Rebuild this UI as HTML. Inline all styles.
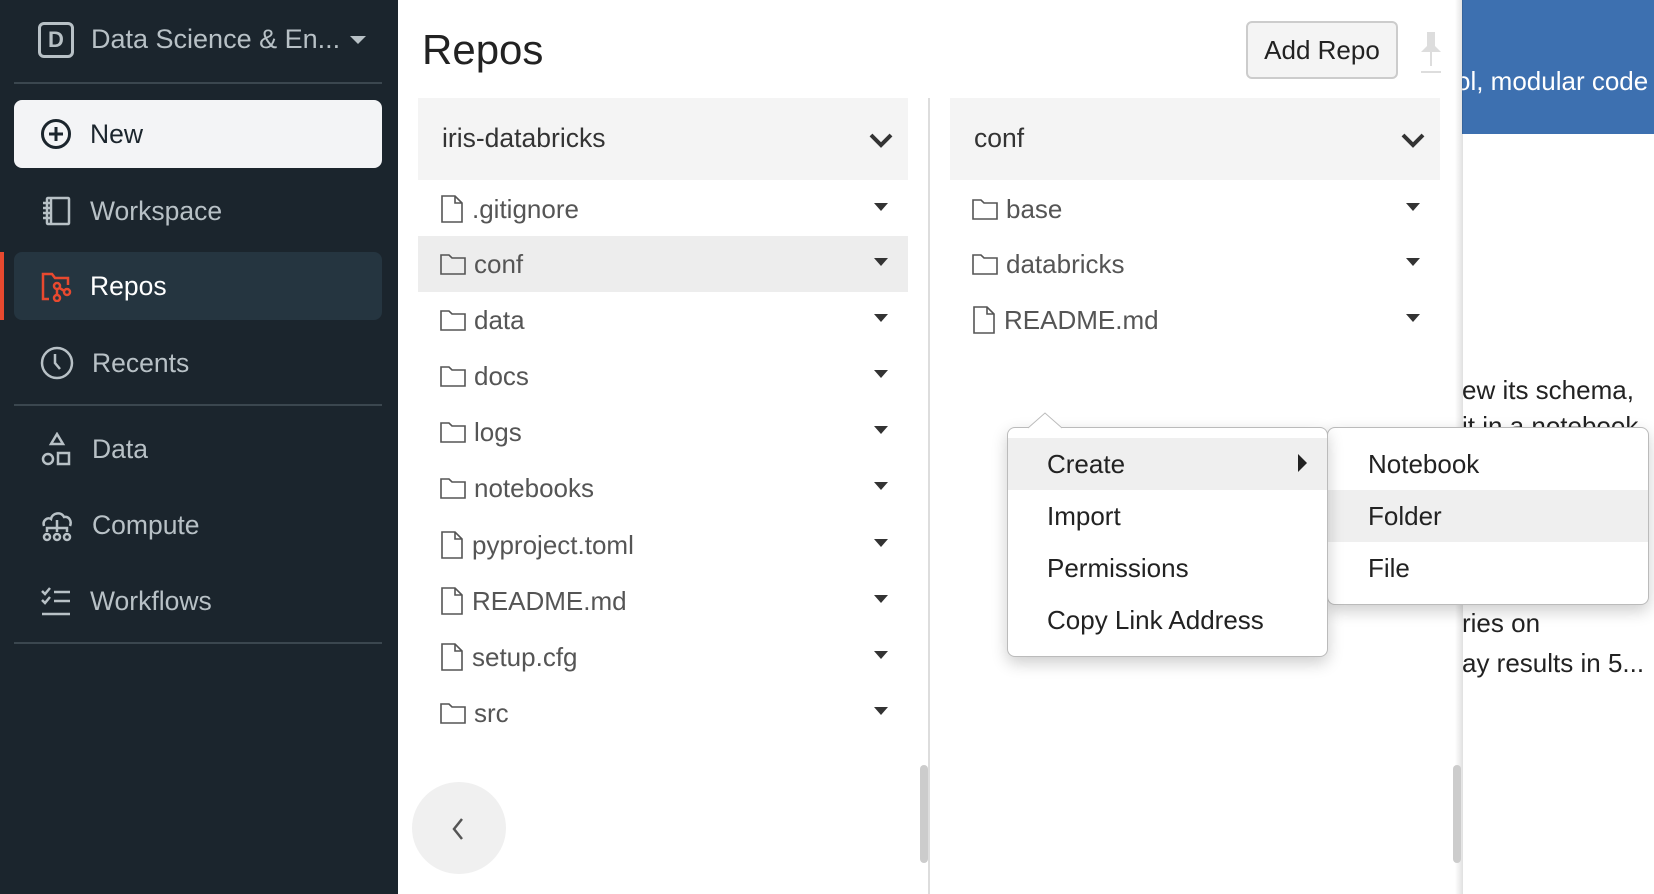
<!DOCTYPE html><html><head><style>
*{margin:0;padding:0;box-sizing:border-box}
body{width:1654px;height:894px;overflow:hidden;position:relative;background:#fff;font-family:"Liberation Sans",sans-serif}
.a{position:absolute}
.sb{left:0;top:0;width:398px;height:894px;background:#1b252d}
.nav{position:absolute;left:14px;width:368px;height:68px;display:flex;align-items:center;padding-left:26px;font-size:26.5px;color:#b8c1c6;border-radius:8px}
.nav svg{margin-right:18px;flex:none}
.hr{position:absolute;left:14px;width:368px;height:2px;background:#3b474f}
.row{position:absolute;height:56px;display:flex;align-items:center;font-size:26px;color:#555;padding-left:22px}
.row svg{margin-right:8px}
.tri{position:absolute;right:20px;top:22px;width:0;height:0;border-left:7px solid transparent;border-right:7px solid transparent;border-top:8px solid #333}
.mi{position:absolute;left:0;right:0;height:52px;display:flex;align-items:center;padding-left:39px;font-size:26px;color:#222}
</style></head><body>
<div class="a sb">
 <div class="a" style="left:38px;top:22px;width:36px;height:36px;border:3px solid #b8c1c6;border-radius:6px;color:#b8c1c6;font-size:22px;font-weight:bold;text-align:center;line-height:30px">D</div>
 <div class="a" style="left:91px;top:24px;font-size:27px;color:#b8c1c6">Data Science &amp; En...</div>
 <div class="a" style="left:350px;top:36px;border-left:8px solid transparent;border-right:8px solid transparent;border-top:8px solid #b8c1c6"></div>
 <div class="hr" style="top:82px"></div>
 <div class="nav" style="top:100px;background:#f3f4f6;color:#1b252d"><svg width="32" height="32" viewBox="0 0 32 32"><circle cx="16" cy="16" r="13.5" fill="none" stroke="#1b252d" stroke-width="3"/><path d="M16 9v14M9 16h14" stroke="#1b252d" stroke-width="3"/></svg>New</div>
 <div class="nav" style="top:177px"><svg width="32" height="32" viewBox="0 0 32 32" fill="none" stroke="#b8c1c6" stroke-width="2.5"><rect x="7" y="3" width="22" height="26" rx="1"/><path d="M3 8h7M3 13h7M3 18h7M3 23h7M11 3v26"/></svg>Workspace</div>
 <div class="a" style="left:0;top:252px;width:4px;height:68px;background:#e8492f"></div>
 <div class="nav" style="top:252px;background:#253540;color:#fff"><svg width="32" height="32" viewBox="0 0 32 32" fill="none" stroke="#e8492f" stroke-width="2.5"><path d="M9 29H3V4h9l3 4h13v7"/><circle cx="17" cy="16" r="3"/><circle cx="17" cy="28" r="3"/><circle cx="27" cy="22" r="3"/><path d="M17 19v6M19.5 18l5 3"/></svg>Repos</div>
 <div class="nav" style="top:329px"><svg width="34" height="34" viewBox="0 0 34 34" fill="none" stroke="#b8c1c6" stroke-width="2.5"><circle cx="17" cy="17" r="15"/><path d="M15 8v9l5 6"/></svg>Recents</div>
 <div class="hr" style="top:404px"></div>
 <div class="nav" style="top:415px"><svg width="34" height="34" viewBox="0 0 34 34" fill="none" stroke="#b8c1c6" stroke-width="2.5"><path d="M17 2l6 10H11z"/><circle cx="8" cy="27" r="5"/><rect x="18" y="21" width="11" height="11"/></svg>Data</div>
 <div class="nav" style="top:491px"><svg width="34" height="34" viewBox="0 0 34 34" fill="none" stroke="#b8c1c6" stroke-width="2.5"><path d="M4 18c-2-6 4-9 7-7 1-6 10-8 13-2 5-1 8 4 6 9"/><path d="M17 12v12M7 24v-4h20v4"/><circle cx="7" cy="29" r="3"/><circle cx="17" cy="29" r="3"/><circle cx="27" cy="29" r="3"/></svg>Compute</div>
 <div class="nav" style="top:567px"><svg width="32" height="32" viewBox="0 0 32 32" fill="none" stroke="#b8c1c6" stroke-width="2.5"><path d="M2 6l3 3 5-6M2 15l3 3 5-6M14 7h16M14 16h16M2 29h28"/></svg>Workflows</div>
 <div class="hr" style="top:642px"></div>
</div>
<div class="a" style="left:422px;top:26px;font-size:42px;color:#222">Repos</div>
<div class="a" style="left:1246px;top:21px;width:152px;height:58px;border:2px solid #ccc;border-radius:6px;background:#f4f4f4;font-size:26px;color:#222;text-align:center;line-height:54px">Add Repo</div>
<svg class="a" style="left:1418px;top:30px" width="26" height="44" viewBox="0 0 26 44"><path d="M7 2h12M9 2v14l-6 6h20l-6-6V2z" fill="#ddd"/><path d="M13 22v14M3 42h20" stroke="#ddd" stroke-width="2"/></svg>
<div class="a" style="left:1462px;top:0;width:192px;height:134px;background:#3d70b0;overflow:hidden"><div style="position:absolute;left:-6px;top:66px;font-size:26px;color:#fff;white-space:nowrap">ol, modular code</div></div>
<div class="a" style="left:1462px;top:134px;width:192px;height:760px;overflow:hidden;font-size:26px;color:#222">
 <div class="a" style="left:0;top:241px;white-space:nowrap">ew its schema,</div>
 <div class="a" style="left:0;top:277px;white-space:nowrap">it in a notebook.</div>
 <div class="a" style="left:0;top:474px;white-space:nowrap">ries on</div>
 <div class="a" style="left:0;top:514px;white-space:nowrap">ay results in 5...</div>
</div>
<div class="a" style="left:1455px;top:0;width:8px;height:894px;background:linear-gradient(90deg,rgba(0,0,0,0),rgba(0,0,0,.12))"></div>
<div class="a" style="left:418px;top:98px;width:490px;height:82px;background:#f4f4f4;font-size:26.5px;color:#333;padding:25px 0 0 24px">iris-databricks</div>
<svg class="a" style="left:868px;top:132px" width="26" height="18"><path d="M3 3l10 10 10-10" fill="none" stroke="#333" stroke-width="4"/></svg>
<div class="a" style="left:928px;top:98px;width:2px;height:796px;background:#ddd"></div>
<div class="a" style="left:950px;top:98px;width:490px;height:82px;background:#f4f4f4;font-size:26.5px;color:#333;padding:25px 0 0 24px">conf</div>
<svg class="a" style="left:1400px;top:132px" width="26" height="18"><path d="M3 3l10 10 10-10" fill="none" stroke="#333" stroke-width="4"/></svg>
<svg width="0" height="0" style="position:absolute"><defs>
<symbol id="fi" viewBox="0 0 24 28"><path d="M2 1h13l7 7v19H2z M15 1v7h7" fill="none" stroke="#555" stroke-width="1.6"/></symbol>
<symbol id="fo" viewBox="0 0 26 22"><path d="M1 2h8l3 3h13v16H1z" fill="none" stroke="#555" stroke-width="1.6"/></symbol>
</defs></svg>
<div class="row" style="left:418px;top:181px;width:490px"><svg width="24" height="28"><use href="#fi"/></svg>.gitignore<i class="tri"></i></div>
<div class="row" style="left:418px;top:236px;width:490px;background:#ededed"><svg width="26" height="22"><use href="#fo"/></svg>conf<i class="tri"></i></div>
<div class="row" style="left:418px;top:292px;width:490px"><svg width="26" height="22"><use href="#fo"/></svg>data<i class="tri"></i></div>
<div class="row" style="left:418px;top:348px;width:490px"><svg width="26" height="22"><use href="#fo"/></svg>docs<i class="tri"></i></div>
<div class="row" style="left:418px;top:404px;width:490px"><svg width="26" height="22"><use href="#fo"/></svg>logs<i class="tri"></i></div>
<div class="row" style="left:418px;top:460px;width:490px"><svg width="26" height="22"><use href="#fo"/></svg>notebooks<i class="tri"></i></div>
<div class="row" style="left:418px;top:517px;width:490px"><svg width="24" height="28"><use href="#fi"/></svg>pyproject.toml<i class="tri"></i></div>
<div class="row" style="left:418px;top:573px;width:490px"><svg width="24" height="28"><use href="#fi"/></svg>README.md<i class="tri"></i></div>
<div class="row" style="left:418px;top:629px;width:490px"><svg width="24" height="28"><use href="#fi"/></svg>setup.cfg<i class="tri"></i></div>
<div class="row" style="left:418px;top:685px;width:490px"><svg width="26" height="22"><use href="#fo"/></svg>src<i class="tri"></i></div>
<div class="row" style="left:950px;top:181px;width:490px"><svg width="26" height="22"><use href="#fo"/></svg>base<i class="tri"></i></div>
<div class="row" style="left:950px;top:236px;width:490px"><svg width="26" height="22"><use href="#fo"/></svg>databricks<i class="tri"></i></div>
<div class="row" style="left:950px;top:292px;width:490px"><svg width="24" height="28"><use href="#fi"/></svg>README.md<i class="tri"></i></div>
<div class="a" style="left:412px;top:782px;width:94px;height:92px;border-radius:50%;background:#f0f0f0"></div>
<svg class="a" style="left:450px;top:816px" width="16" height="26"><path d="M12 3L4 13l8 10" fill="none" stroke="#555" stroke-width="2.5"/></svg>
<div class="a" style="left:920px;top:765px;width:8px;height:98px;border-radius:4px;background:#ccc"></div>
<div class="a" style="left:1453px;top:765px;width:8px;height:98px;border-radius:4px;background:#ccc"></div>
<div class="a" style="left:1327px;top:427px;width:322px;height:178px;background:#fff;border:1px solid #bbb;border-radius:8px;box-shadow:0 6px 16px rgba(0,0,0,.2);overflow:hidden">
 <div class="mi" style="top:10px;padding-left:40px">Notebook</div>
 <div class="mi" style="top:62px;padding-left:40px;background:#efefef">Folder</div>
 <div class="mi" style="top:114px;padding-left:40px">File</div>
</div>
<div class="a" style="left:1007px;top:427px;width:321px;height:230px;background:#fff;border:1px solid #bbb;border-radius:8px;box-shadow:0 6px 16px rgba(0,0,0,.2)">
 <div class="mi" style="top:10px;background:#efefef">Create<i style="position:absolute;left:290px;top:16px;border-top:9px solid transparent;border-bottom:9px solid transparent;border-left:9px solid #222"></i></div>
 <div class="mi" style="top:62px">Import</div>
 <div class="mi" style="top:114px">Permissions</div>
 <div class="mi" style="top:166px">Copy Link Address</div>
</div>
<svg class="a" style="left:1028px;top:412px" width="34" height="17"><path d="M0 16L17 1l17 15" fill="#fff" stroke="#bbb" stroke-width="1"/></svg>
</body></html>
